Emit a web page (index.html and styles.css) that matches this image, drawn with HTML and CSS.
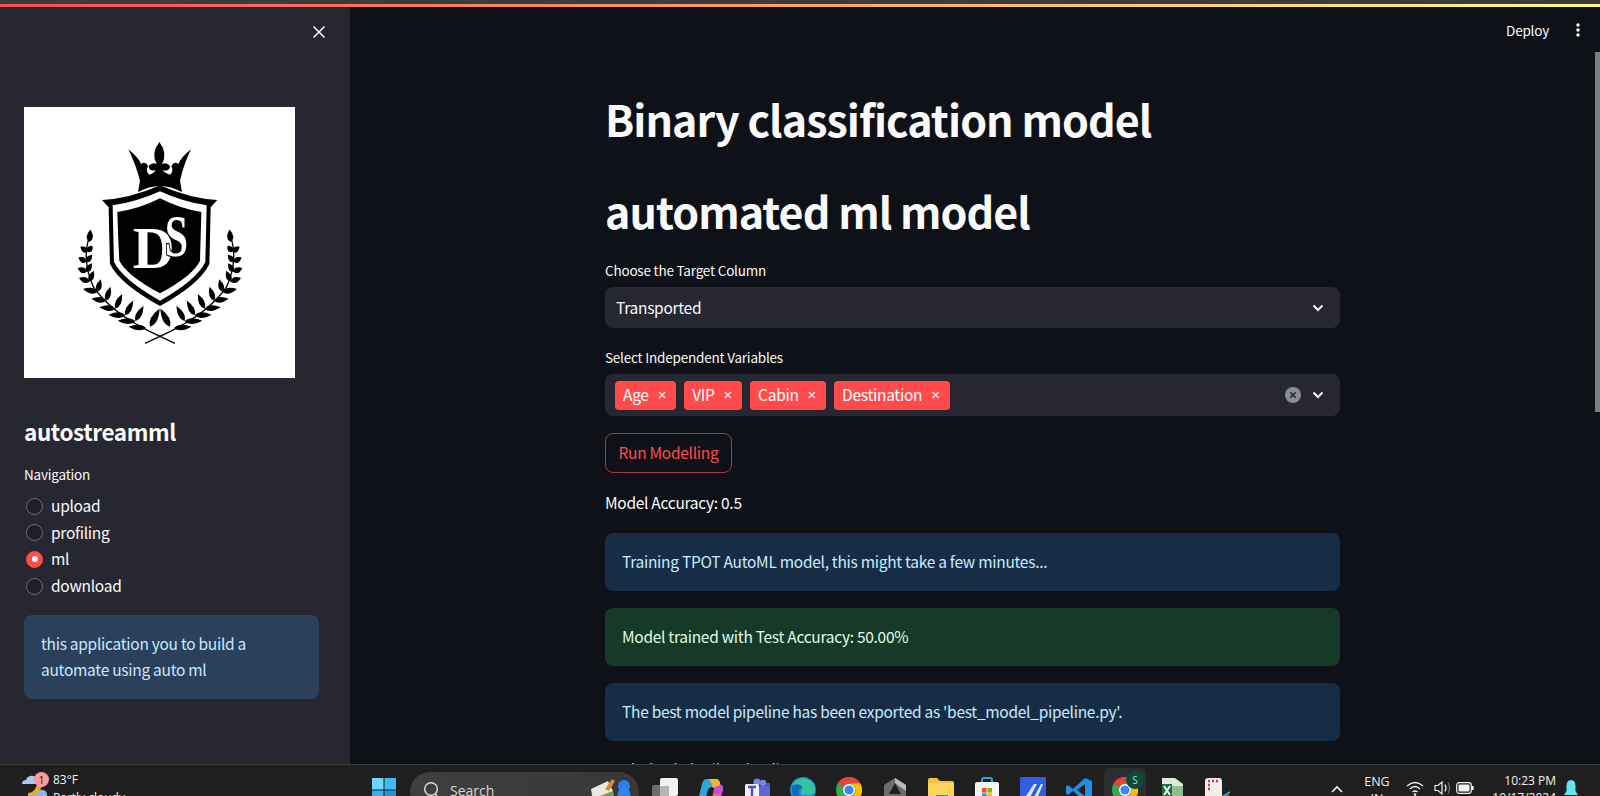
FILE: index.html
```html
<!DOCTYPE html>
<html lang="en">
<head>
<meta charset="utf-8">
<title>autostreamml</title>
<link rel="stylesheet" href="styles.css">
</head>
<body>
<svg class="defs" width="0" height="0" aria-hidden="true">
  <defs>
    <path id="leaf" d="M0 0Q14 -17 44 0Q14 17 0 0Z"/>
    <g id="branch" fill="#000">
      <path d="M86 325Q66 395 100 470Q150 545 270 605L345 640" fill="none" stroke="#000" stroke-width="4"/>
      <use href="#leaf" transform="translate(88 336) rotate(-85) scale(.85 1.1)"/>
      <use href="#leaf" transform="translate(82 366) rotate(-142) scale(.6 1)"/>
      <use href="#leaf" transform="translate(82 366) rotate(-50) scale(.55 1)"/>
      <use href="#leaf" transform="translate(78 396) rotate(-148) scale(.6 1)"/>
      <use href="#leaf" transform="translate(78 396) rotate(-50) scale(.65 1)"/>
      <use href="#leaf" transform="translate(79 426) rotate(-155) scale(.65 1)"/>
      <use href="#leaf" transform="translate(79 426) rotate(-58) scale(.7 1)"/>
      <use href="#leaf" transform="translate(88 455) rotate(-160) scale(.75 1)"/>
      <use href="#leaf" transform="translate(88 455) rotate(-68) scale(.8 1)"/>
      <use href="#leaf" transform="translate(112 486) rotate(-168) scale(1 1)"/>
      <use href="#leaf" transform="translate(112 486) rotate(-75) scale(.9 1)"/>
      <use href="#leaf" transform="translate(138 512) rotate(-172) scale(1 1)"/>
      <use href="#leaf" transform="translate(138 512) rotate(-72) scale(1 1)"/>
      <use href="#leaf" transform="translate(166 536) rotate(-175) scale(1.1 1)"/>
      <use href="#leaf" transform="translate(166 536) rotate(-65) scale(1.1 1)"/>
      <use href="#leaf" transform="translate(196 556) rotate(-178) scale(1.15 1)"/>
      <use href="#leaf" transform="translate(196 556) rotate(-62) scale(1.15 1)"/>
      <use href="#leaf" transform="translate(226 574) rotate(-178) scale(1.2 1)"/>
      <use href="#leaf" transform="translate(226 574) rotate(-62) scale(1.2 1)"/>
      <use href="#leaf" transform="translate(258 594) rotate(-176) scale(1.2 1)"/>
      <use href="#leaf" transform="translate(270 590) rotate(-62) scale(1.4 1.15)"/>
    </g>
    <g id="chrome">
      <circle cx="13" cy="13" r="13" fill="#34a853"/>
      <path d="M13 0A13 13 0 0 1 24.3 6.5H13A6.5 6.5 0 0 0 7.3 9.8L1.7 6.5A13 13 0 0 1 13 0Z" fill="#ea4335"/>
      <path d="M24.3 6.5A13 13 0 0 1 13 26L18.6 16.2A6.5 6.5 0 0 0 13 6.5Z" fill="#fbbc04"/>
      <circle cx="13" cy="13" r="6" fill="#fff"/>
      <circle cx="13" cy="13" r="4.6" fill="#4285f4"/>
    </g>
  </defs>
</svg>

<div class="top-strip"></div>
<div class="deco-bar"></div>

<div class="app">
  <aside class="sidebar">
    <div class="sb-head">
      <svg class="close-x" width="14" height="14" viewBox="0 0 14 14"><path d="M1.5 1.5L12.5 12.5M12.5 1.5L1.5 12.5" stroke="#fafafa" stroke-width="1.5" fill="none"/></svg>
    </div>

    <svg class="logo" width="271" height="271" viewBox="-108 -69 813 813">
      <rect x="-108" y="-69" width="813" height="813" fill="#fff"/>
      <!-- crown -->
      <path d="M205 58Q235 82 243 102Q256 92 264 108Q256 124 268 134Q282 130 288 120Q268 126 266 108Q276 96 290 102Q272 70 298 36Q324 70 306 102Q320 96 330 108Q328 126 308 120Q314 130 330 134Q342 124 334 108Q342 92 355 102Q363 82 393 58Q372 100 360 152L366 186Q300 150 234 186L240 152Q226 100 205 58Z" fill="#000"/>
      <!-- shield -->
      <path d="M126 210Q210 206 300 166Q390 206 472 210L452 232Q450 330 448 402Q420 462 300 528Q180 462 150 402Q148 330 146 232Z" fill="#000"/>
      <path d="M158 226Q230 216 300 184Q370 216 440 226Q438 320 436 396Q410 450 300 512Q190 450 162 396Q160 320 158 226Z" fill="#fff"/>
      <path d="M172 246Q240 236 300 205Q360 236 424 246Q422 320 420 392Q400 436 300 490Q200 436 178 392Q174 320 172 246Z" fill="#000"/>
      <text class="logo-d" x="218" y="415" textLength="125" lengthAdjust="spacingAndGlyphs">D</text>
      <text class="logo-s" x="314" y="378" textLength="70" lengthAdjust="spacingAndGlyphs">S</text>
      <use href="#branch"/>
      <use href="#branch" transform="translate(600 0) scale(-1 1)"/>
    </svg>

    <h2 class="sb-title">autostreamml</h2>
    <div class="sb-label">Navigation</div>
    <ul class="radio-list">
      <li class="radio-row"><span class="radio"></span>upload</li>
      <li class="radio-row"><span class="radio"></span>profiling</li>
      <li class="radio-row"><span class="radio radio-on"></span>ml</li>
      <li class="radio-row"><span class="radio"></span>download</li>
    </ul>
    <div class="sb-alert">this application you to build a automate using auto ml</div>
  </aside>

  <main class="main">
    <header class="main-head">
      <span class="deploy">Deploy</span>
      <svg class="kebab" width="4" height="14" viewBox="0 0 4 14"><circle cx="2" cy="2" r="1.7"/><circle cx="2" cy="7" r="1.7"/><circle cx="2" cy="12" r="1.7"/></svg>
    </header>
    <div class="scroll-thumb"></div>

    <div class="content">
      <h1 class="heading">Binary classification model</h1>
      <h1 class="heading">automated ml model</h1>

      <label class="field-label">Choose the Target Column</label>
      <div class="select">
        <span class="select-value">Transported</span>
        <svg class="chevron" width="12" height="8" viewBox="0 0 12 8"><path d="M1.5 1.5L6 6L10.5 1.5" fill="none" stroke="#fafafa" stroke-width="2"/></svg>
      </div>

      <label class="field-label second">Select Independent Variables</label>
      <div class="select multi">
        <div class="chips">
          <span class="chip">Age<i class="chip-x">×</i></span>
          <span class="chip">VIP<i class="chip-x">×</i></span>
          <span class="chip">Cabin<i class="chip-x">×</i></span>
          <span class="chip">Destination<i class="chip-x">×</i></span>
        </div>
        <svg class="clear" width="16" height="16" viewBox="0 0 16 16"><circle cx="8" cy="8" r="8" fill="#8b8c99"/><path d="M5.3 5.3L10.7 10.7M10.7 5.3L5.3 10.7" stroke="#262730" stroke-width="1.5"/></svg>
        <svg class="chevron" width="12" height="8" viewBox="0 0 12 8"><path d="M1.5 1.5L6 6L10.5 1.5" fill="none" stroke="#fafafa" stroke-width="2"/></svg>
      </div>

      <button class="btn">Run Modelling</button>
      <p class="para">Model Accuracy: 0.5</p>

      <div class="alert info">Training TPOT AutoML model, this might take a few minutes...</div>
      <div class="alert ok">Model trained with Test Accuracy: 50.00%</div>
      <div class="alert info">The best model pipeline has been exported as 'best_model_pipeline.py'.</div>
      <p class="para tail">Optimized pipeline details</p>
    </div>
  </main>
</div>

<footer class="taskbar">
  <div class="weather">
    <svg class="weather-ic" width="28" height="28" viewBox="0 0 28 28">
      <path d="M2 15a4 4 0 0 1 4-4h0a6 6 0 0 1 11-1a4 4 0 0 1 3 5Z" fill="#a9c7ef"/>
      <path d="M8 24Q14 24 17 16L22 17Q18 28 8 28Z" fill="#f5a623"/>
      <path d="M14 28a4 4 0 0 1 4-5a5 5 0 0 1 9 2v3Z" fill="#8fb8ea"/>
    </svg>
    <span class="badge">1</span>
    <div class="weather-text"><span>83°F</span><span>Partly cloudy</span></div>
  </div>

  <div class="tb-center">
    <svg class="win" width="24" height="24" viewBox="0 0 24 24">
      <rect width="11.5" height="11.5" fill="#6fd6f8"/><rect x="12.5" width="11.5" height="11.5" fill="#3cbcf2"/>
      <rect y="12.5" width="11.5" height="11.5" fill="#35b2ee"/><rect x="12.5" y="12.5" width="11.5" height="11.5" fill="#1b93e0"/>
    </svg>
    <div class="search">
      <svg width="17" height="20" viewBox="0 0 17 20"><circle cx="8" cy="8" r="6.3" fill="none" stroke="#d8d8d8" stroke-width="1.5"/><path d="M12.5 13L16 18" stroke="#d8d8d8" stroke-width="1.5"/></svg>
      <span class="search-text">Search</span>
      <svg class="search-art" width="48" height="24" viewBox="0 0 48 24">
        <path d="M0 12L17 4L22 14L8 24H2Z" fill="#e9eadf"/><path d="M14 12L21 2L24 4L18 14Z" fill="#e8843a"/>
        <path d="M6 20L22 14L24 24H8Z" fill="#6aa35f"/>
        <circle cx="33" cy="9" r="6" fill="#2f7fe8"/><path d="M26 24Q26 10 33 10Q40 10 40 24Z" fill="#2b86f0"/>
      </svg>
    </div>

    <div class="tb-slots">
      <div class="slot"><svg width="26" height="24" viewBox="0 0 26 24"><rect y="8" width="17" height="16" rx="2" fill="#6c6c6c"/><rect x="8" y="1" width="18" height="18" rx="2" fill="#f1f1f1"/><rect x="8" y="9" width="9" height="10" fill="#b5b5b5"/></svg></div>
      <div class="slot"><svg width="26" height="26" viewBox="0 0 26 26"><path d="M9 2H18Q21 2 22 6L23 10H14Q11 10 10 13L7 24H4Q0 24 1 19L4 7Q5 2 9 2Z" fill="#2fa5dc"/><path d="M11 2H18Q21 2 22 6L23 11H15Q14 6 11 2Z" fill="#f2b632"/><path d="M23 8Q26 8 25 13L23 20Q22 24 18 24H8Q13 24 14 20L16 12Q16 9 20 9Z" fill="#c94fd0"/><path d="M8 24H17Q21 24 23 18L17 17L14 21Q12 24 8 24Z" fill="#e8708f"/></svg></div>
      <div class="slot"><svg width="26" height="24" viewBox="0 0 26 24"><circle cx="19" cy="6" r="3.2" fill="#7b83eb"/><circle cx="24" cy="8" r="2.2" fill="#5059c9"/><rect x="14" y="9" width="12" height="13" rx="3" fill="#5f67d6"/><circle cx="13" cy="5" r="3.5" fill="#7b83eb"/><rect x="1" y="7" width="14" height="14" rx="1.5" fill="#f1f1fb"/><path d="M4 10H12M8 10V19" stroke="#4a52b8" stroke-width="2.4" fill="none"/></svg></div>
      <div class="slot"><svg width="26" height="26" viewBox="0 0 26 26"><circle cx="13" cy="13" r="13" fill="#1a8fd8"/><path d="M2 9A12 12 0 0 1 25 11Q26 18 19 18H13Q9 17 12 13Q13 9 8 8Q4 7 2 9Z" fill="#36c3a0"/><path d="M2 9Q8 5 13 10Q9 11 9 16Q9 24 17 25A13 13 0 0 1 2 9Z" fill="#0f6cbd"/></svg></div>
      <div class="slot"><svg width="26" height="26" viewBox="0 0 26 26"><use href="#chrome"/></svg></div>
      <div class="slot"><svg width="24" height="26" viewBox="0 0 24 26"><path d="M12 1L23 8V19L12 26L1 19V8Z" fill="#6a6d70"/><path d="M12 6L18 17H6Z" fill="#1f1f1f"/><path d="M12 1L23 8V14L12 6Z" fill="#b9bcbf"/></svg></div>
      <div class="slot"><svg width="26" height="26" viewBox="0 0 26 26"><path d="M0 3Q0 1 2 1H9L12 4H24Q26 4 26 6V26H0Z" fill="#f5c242"/><rect y="6" width="26" height="20" fill="#fcd45c"/><rect x="8" y="18" width="12" height="8" fill="#2f86c9"/></svg></div>
      <div class="slot"><svg width="26" height="26" viewBox="0 0 26 26"><path d="M8 6V3Q8 1 10 1H16Q18 1 18 3V6" fill="none" stroke="#2ba5df" stroke-width="2"/><rect x="1" y="5" width="24" height="21" rx="2" fill="#f5f5f5"/><rect x="8" y="11" width="4.6" height="4.6" fill="#f25022"/><rect x="13.4" y="11" width="4.6" height="4.6" fill="#7fba00"/><rect x="8" y="16.4" width="4.6" height="4.6" fill="#00a4ef"/><rect x="13.4" y="16.4" width="4.6" height="4.6" fill="#ffb900"/></svg></div>
      <div class="slot"><svg width="26" height="26" viewBox="0 0 26 26"><rect width="26" height="26" rx="1" fill="#2d5fe0"/><path d="M4 22L14 7H17L9 22ZM13 22L21 7H23L17 22Z" fill="#dfe7fb"/></svg></div>
      <div class="slot"><svg width="26" height="26" viewBox="0 0 26 26"><path d="M19 1L26 4V22L19 25L7 14L2 18L0 16.5V9.5L2 8L7 12Z" fill="#1f8ee0"/><path d="M19 7V19L11 13Z" fill="#1f1f1f"/></svg></div>
      <div class="slot active"><svg width="26" height="26" viewBox="0 0 26 26"><use href="#chrome"/></svg><span class="avatar">S</span></div>
      <div class="slot"><svg width="24" height="26" viewBox="0 0 24 26"><path d="M3 1H16L24 7V26H3Z" fill="#d9ecd9"/><rect x="8" y="9" width="16" height="17" fill="#8cc08c"/><path d="M3 7H13V20H3Z" fill="#1d6f42"/><path d="M5 9L11 18M11 9L5 18" stroke="#fff" stroke-width="1.8"/></svg></div>
      <div class="slot"><svg width="26" height="26" viewBox="0 0 26 26"><rect x="1" y="1" width="17" height="24" rx="3" fill="#f1eeee"/><path d="M4 4H6M4 8H6M4 12H6M8 4H10M12 4H14" stroke="#d63b3b" stroke-width="2.4"/><path d="M18 20L26 15" stroke="#35a4dc" stroke-width="2"/><circle cx="24" cy="21" r="2" fill="none" stroke="#35a4dc" stroke-width="1.5"/></svg></div>
    </div>
  </div>

  <div class="tray">
    <svg class="tray-up" width="12" height="8" viewBox="0 0 12 8"><path d="M1 7L6 2L11 7" fill="none" stroke="#f2f2f2" stroke-width="1.6"/></svg>
    <div class="lang"><span>ENG</span><span>IN</span></div>
    <svg class="wifi" width="18" height="16" viewBox="0 0 18 16"><path d="M1 6Q9 -1 17 6M4 9Q9 4 14 9M6.5 12Q9 10 11.5 12" fill="none" stroke="#f0f0f0" stroke-width="1.3"/><circle cx="9" cy="14.5" r="1.3" fill="#f0f0f0"/></svg>
    <svg class="vol" width="18" height="16" viewBox="0 0 18 16"><path d="M1 5.5H4L8 2V14L4 10.5H1Z" fill="none" stroke="#f0f0f0" stroke-width="1.2"/><path d="M11 4.5Q13 8 11 11.5" fill="none" stroke="#f0f0f0" stroke-width="1.2"/><path d="M14 2.5Q17 8 14 13.5" fill="none" stroke="#777" stroke-width="1.1"/></svg>
    <svg class="batt" width="18" height="12" viewBox="0 0 18 12"><rect x=".7" y=".7" width="14.6" height="10.6" rx="2.5" fill="none" stroke="#f0f0f0" stroke-width="1.2"/><rect x="2.5" y="2.5" width="11" height="7" rx="1" fill="#f0f0f0"/><rect x="16" y="4" width="1.6" height="4" fill="#f0f0f0"/></svg>
    <div class="clock"><span>10:23 PM</span><span>10/17/2024</span></div>
    <svg class="bell" width="14" height="20" viewBox="0 0 14 20"><path d="M7 1Q11.5 1 11.5 7V12L14 16H0L2.5 12V7Q2.5 1 7 1Z" fill="#5fe6f2"/></svg>
  </div>
</footer>
</body>
</html>
```
FILE: styles.css
```css
* { box-sizing: border-box; }
html, body { margin: 0; padding: 0; height: 100%; overflow: hidden; }
body {
  display: flex;
  flex-direction: column;
  background: #0e1117;
  color: #fafafa;
  font-family: "Noto Sans CJK SC", "Source Sans Pro", "Noto Sans", sans-serif;
  font-size: 15.5px;
  letter-spacing: -.28px;
}
.defs { position: absolute; }
.top-strip { height: 4px; background: #3b3b3b; flex: none; }
.deco-bar { height: 3px; flex: none; background: linear-gradient(90deg, #ff4b4b, #fffd80); }

.app { height: 757px; flex: none; display: flex; overflow: hidden; }

/* sidebar */
.sidebar { width: 350px; flex: none; background: #262730; padding: 0 31px 0 24px; }
.sb-head { height: 100px; margin-right: -7px; padding-top: 18px; display: flex; justify-content: flex-end; align-items: flex-start; }
.close-x { display: block; }
.logo { display: block; }
.logo-d, .logo-s { font-family: "Liberation Serif", serif; font-size: 175px; font-weight: 700; letter-spacing: 0; }
.logo-d { fill: #fff; }
.logo-s { fill: #fff; stroke: #000; stroke-width: 7px; paint-order: stroke; }
.sb-title { margin: 38px 0 0; font-size: 22.5px; line-height: 30px; font-weight: 700; letter-spacing: -.4px; }
.sb-label { margin-top: 18px; font-size: 13.5px; line-height: 20px; letter-spacing: -.2px; }
.radio-list { list-style: none; margin: 9px 0 0; padding: 0; }
.radio-row { height: 26.6px; display: flex; align-items: center; gap: 8px; padding: 0 0 2px 2px; }
.radio { width: 17px; height: 17px; margin-top: 2px; border-radius: 50%; border: 1px solid #6f7079; background: #1f2027; flex: none; position: relative; }
.radio-on { background: #ff4b4b; border-color: #ff4b4b; }
.radio-on::after { content: ""; position: absolute; left: 4.5px; top: 4.5px; width: 6px; height: 6px; border-radius: 50%; background: #fff; }
.sb-alert { margin-top: 16px; padding: 16px 17px; border-radius: 8px; background: #2a405b; color: #c7ebff; line-height: 25.6px; }

/* main */
.main { flex: 1; position: relative; overflow: hidden; }
.main-head { position: absolute; top: 14px; right: 20px; display: flex; align-items: center; gap: 27px; }
.deploy { font-size: 13.5px; line-height: 18px; letter-spacing: -.2px; }
.kebab { fill: #fafafa; display: block; }
.scroll-thumb { position: absolute; right: 0; top: 45px; width: 5px; height: 360px; background: #7d7d7d; }
.content { padding: 69px 260px 0 255px; }
.heading { margin: 0; padding: 16.2px 0 22.2px; font-size: 43px; line-height: 53.76px; font-weight: 700; letter-spacing: -.96px; white-space: nowrap; }
.field-label { display: block; font-size: 13.5px; line-height: 20px; letter-spacing: -.2px; }
.field-label.second { margin-top: 19px; }
.select { margin-top: 7px; height: 41px; border-radius: 8px; background: #262730; display: flex; align-items: center; padding: 0 16px 0 11px; }
.select-value { flex: 1; padding-bottom: 2px; }
.chevron { flex: none; display: block; }
.multi { height: 42px; padding-left: 10px; }
.chips { flex: 1; display: flex; gap: 8px; }
.chip { height: 29px; display: flex; align-items: center; padding: 0 10px 2px 8px; border-radius: 4px; background: #ff4b4b; color: #fff; white-space: nowrap; }
.chip-x { font-family: "Liberation Sans", sans-serif; font-style: normal; font-size: 15px; margin-left: 9px; }
.clear { display: block; margin-right: 11px; }
.btn { display: block; margin-top: 17px; height: 40px; width: 127px; padding: 0 0 2px; border: 1px solid #a83a40; border-radius: 8px; background: transparent; color: #ff4b4b; font: inherit; letter-spacing: inherit; }
.para { margin: 17px 0 0; line-height: 25.6px; }
.alert { height: 58px; margin-top: 17px; padding: 0 17px 2px; display: flex; align-items: center; border-radius: 8px; }
.info { background: #172d45; color: #c7ebff; }
.ok { background: #173928; color: #dffde9; }
.para.tail { margin-top: 16px; }

/* taskbar */
.taskbar { height: 32px; flex: none; position: relative; display: flex; overflow: hidden; background: #1f1f1f; border-top: 1px solid #3d3d3d; font-family: "Open Sans", "Noto Sans", sans-serif; color: #f2f2f2; font-size: 12px; letter-spacing: 0; }
.weather { width: 372px; flex: none; display: flex; padding-left: 20px; position: relative; }
.weather-ic { margin-top: 4px; flex: none; }
.badge { position: absolute; left: 34px; top: 7px; width: 15px; height: 15px; border-radius: 50%; background: #ff9a9e; color: #2a1a1a; font-size: 11px; line-height: 15px; text-align: center; }
.weather-text { margin-left: 5px; margin-top: 6px; display: flex; flex-direction: column; line-height: 18px; }
.tb-center { flex: none; display: flex; align-items: flex-start; }
.win { margin-top: 13px; display: block; flex: none; }
.search { width: 229px; height: 40px; margin: 7px 0 0 14px; padding-left: 13px; border-radius: 20px; background: linear-gradient(90deg, #3f3f3f, #383838); display: flex; align-items: flex-start; position: relative; flex: none; }
.search svg:first-child { margin-top: 9px; flex: none; }
.search-text { margin: 9px 0 0 10px; font-size: 14px; line-height: 19px; color: #d8d8d8; }
.search-art { position: absolute; right: 0; top: 5px; }
.tb-slots { display: flex; margin-left: 3px; }
.slot { width: 42px; height: 40px; margin: 3px 2px 0; padding-top: 9px; display: flex; justify-content: center; align-items: flex-start; position: relative; border-radius: 5px 5px 0 0; flex: none; }
.slot.active { background: #2d2d2d; }
.avatar { position: absolute; left: 22px; top: 3px; width: 18px; height: 18px; border-radius: 50%; background: #0c4a3c; color: #a8d8c8; font-size: 10px; line-height: 18px; text-align: center; }
.tray { position: absolute; right: 0; top: 0; width: 271px; height: 40px; }
.tray > svg { position: absolute; display: block; }
.tray-up { left: 2px; top: 20px; }
.lang { position: absolute; left: 24px; width: 48px; top: 8px; display: flex; flex-direction: column; align-items: center; line-height: 17px; font-size: 12.5px; }
.wifi { left: 77px; top: 15px; }
.vol { left: 105px; top: 15px; }
.batt { left: 127px; top: 17px; }
.clock { position: absolute; right: 44px; top: 7px; display: flex; flex-direction: column; align-items: flex-end; line-height: 17px; white-space: nowrap; }
.bell { left: 235px; top: 14px; }
```
